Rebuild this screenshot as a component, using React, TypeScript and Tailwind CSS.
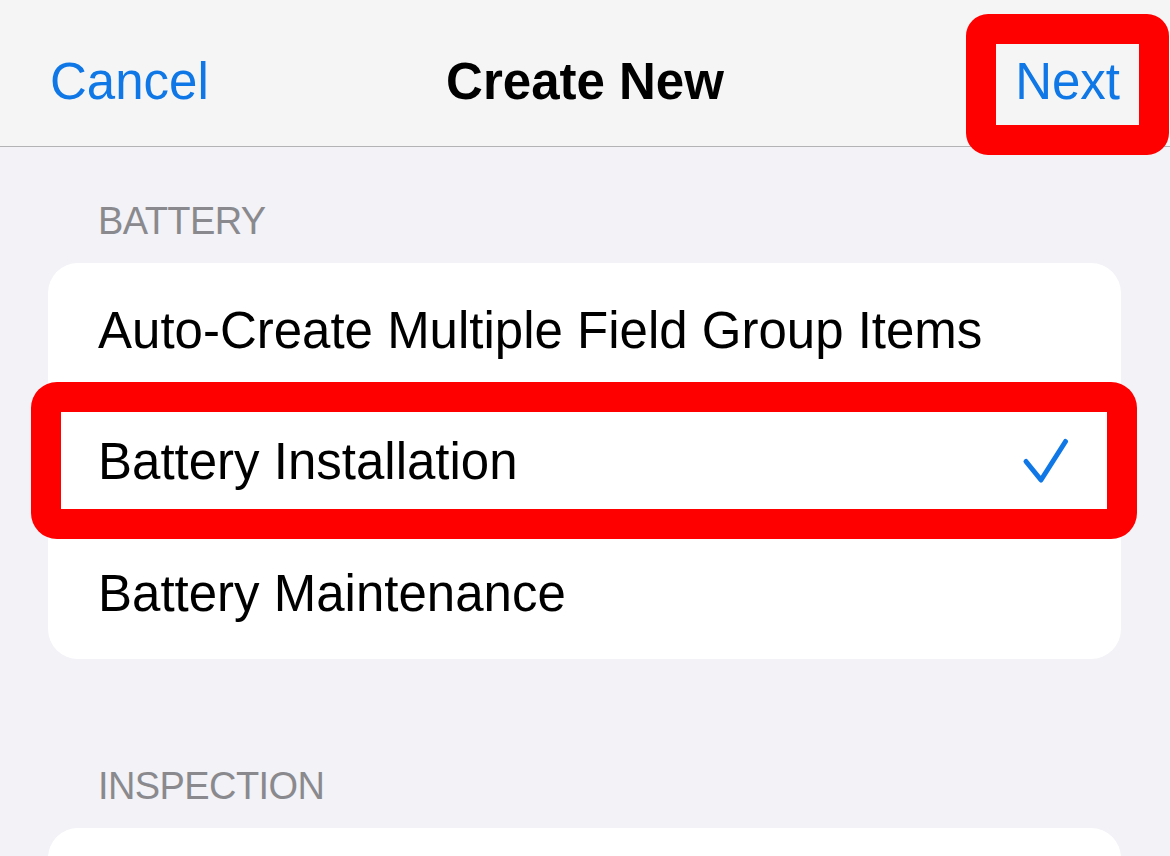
import React from "react";

const font = { fontFamily: '"Liberation Sans", Arial, sans-serif' };

function SectionHeader({ label, top }: { label: string; top: string }) {
  return (
    <div
      className={`${top} mb-[22px] ml-[98px] text-[38px] leading-[39px] tracking-[-0.6px] text-[#8a8a8e]`}
    >
      {label}
    </div>
  );
}

function Check() {
  return (
    <svg width="48" height="48" viewBox="0 0 48 48" className="shrink-0">
      <polyline
        points="4,24.5 19,43 43.5,4.5"
        fill="none"
        stroke="#0f78e6"
        strokeWidth="5"
        strokeLinecap="round"
        strokeLinejoin="round"
      />
    </svg>
  );
}

export default function App() {
  return (
    <div
      className="relative h-[856px] w-[1170px] overflow-hidden bg-[#f2f2f7]"
      style={font}
    >
      {/* Navigation bar */}
      <div className="relative flex h-[147px] items-center justify-between border-b border-[#b3b3b6] bg-[#f5f5f6] pl-[50px] pr-[50px] pt-[16px] text-[51px] leading-[51px]">
        <span className="text-[#0f78e6]">Cancel</span>
        <span className="absolute left-1/2 top-[56px] -translate-x-1/2 font-bold text-black">
          Create New
        </span>
        <span className="text-[#0f78e6]">Next</span>
        <div className="absolute right-[1px] top-[14px] h-[141px] w-[203px] rounded-[22px] border-[30px] border-[#ff0000]" />
      </div>

      {/* BATTERY section */}
      <SectionHeader label="BATTERY" top="mt-[55px]" />
      <div className="ml-[48px] mr-[49px] rounded-[30px] bg-white">
        <div className="flex h-[132px] items-center pl-[50px] pt-[3px] text-[51px] leading-[51px] text-black">
          Auto-Create Multiple Field Group Items
        </div>
        <div className="relative flex h-[132px] items-center justify-between pl-[50px] pr-[51px] text-[51px] leading-[51px] text-black">
          <span>Battery Installation</span>
          <Check />
          <div className="absolute -bottom-[12px] -left-[17px] -right-[16px] -top-[13px] rounded-[26px] border-[30px] border-[#ff0000]" />
        </div>
        <div className="flex h-[132px] items-center pl-[50px] text-[51px] leading-[51px] text-black">
          Battery Maintenance
        </div>
      </div>

      {/* INSPECTION section */}
      <SectionHeader label="INSPECTION" top="mt-[108px]" />
      <div className="ml-[48px] mr-[49px] h-[132px] rounded-[30px] bg-white" />
    </div>
  );
}
